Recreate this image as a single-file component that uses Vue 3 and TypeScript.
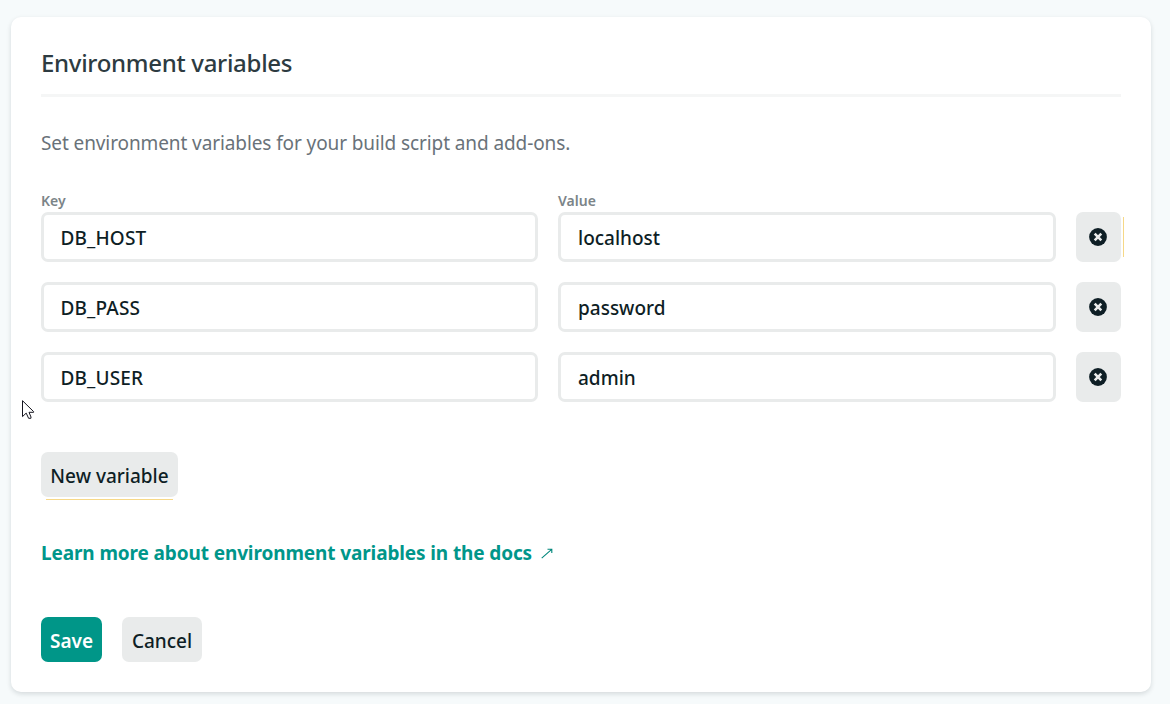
<script setup lang="ts">
import { ref } from 'vue'

interface EnvVariable {
  key: string
  value: string
}

const variables = ref<EnvVariable[]>([
  { key: 'DB_HOST', value: 'localhost' },
  { key: 'DB_PASS', value: 'password' },
  { key: 'DB_USER', value: 'admin' },
])

function addVariable(): void {
  variables.value.push({ key: '', value: '' })
}

function removeVariable(index: number): void {
  variables.value.splice(index, 1)
}
</script>

<template>
  <main class="page">
    <section class="card">
      <h2 class="title"><span>Environment variables</span></h2>
      <p class="intro"><span>Set environment variables for your build script and add-ons.</span></p>

      <div class="labels">
        <span class="label">Key</span>
        <span class="label">Value</span>
      </div>
      <div class="rows">
        <div v-for="(item, index) in variables" :key="index" class="row">
          <div class="field key"><span>{{ item.key }}</span></div>
          <div class="field value"><span>{{ item.value }}</span></div>
          <button
            class="remove"
            :class="{ marked: index === 0 }"
            type="button"
            aria-label="Remove"
            @click="removeVariable(index)"
          >
            <svg width="18" height="18" viewBox="0 0 18 18">
              <circle cx="9" cy="9" r="8.9" fill="#0e1e25" />
              <path d="M5.7 5.7 12.3 12.3M12.3 5.7 5.7 12.3" stroke="#e9ebeb" stroke-width="2.6" />
            </svg>
          </button>
        </div>
      </div>

      <button class="btn new" type="button" @click="addVariable"><span>New variable</span></button>

      <a class="docs">
        <span>Learn more about environment variables in the docs</span>
        <svg width="12" height="11" viewBox="0 0 12 11">
          <path d="M0.7 10.1 10.4 1.6M6.5 1.2H10.8V5" fill="none" stroke="#00867b" stroke-width="1.1" />
        </svg>
      </a>

      <div class="actions">
        <button class="btn save" type="button"><span>Save</span></button>
        <button class="btn cancel" type="button"><span>Cancel</span></button>
      </div>
    </section>

    <svg class="cursor" width="13" height="20" viewBox="0 0 13 20">
      <path
        d="M0.5 0.7V16.6L4.2 13.1L6.6 18.3H8.9L9 17L7 12.3H11.6V11.6Z"
        fill="#fff"
        stroke="#15151f"
        stroke-width="1"
      />
    </svg>
  </main>
</template>

<style>
body {
  background: #f6fafb;
}
</style>

<style scoped>
.page {
  box-sizing: border-box;
  position: relative;
  height: 704px;
  padding: 17px 19px 12px 11px;
  overflow: hidden;
  background: #f6fafb;
  font-family: 'Noto Sans', 'Open Sans', sans-serif;
  font-size: 19px;
  color: #0e1e25;
}
.card {
  box-sizing: border-box;
  display: flex;
  flex-direction: column;
  align-items: flex-start;
  height: 675px;
  padding: 30px;
  border-radius: 10px;
  background: #fff;
  box-shadow: 0 2px 5px rgba(14, 30, 37, 0.14);
}
span {
  white-space: nowrap;
}
.title {
  box-sizing: border-box;
  width: 100%;
  height: 50px;
  margin: 0;
  border-bottom: 3px solid #f5f6f6;
  font-size: 24px;
  font-weight: 500;
  line-height: 31px;
  letter-spacing: -0.3px;
  color: #2d3b41;
}
.intro {
  height: 30px;
  margin: 31px 0 0;
  line-height: 30px;
  letter-spacing: -0.1px;
  color: #697279;
}
.labels {
  display: grid;
  grid-template-columns: 497px 498px;
  gap: 20px;
  margin-top: 34px;
  height: 20px;
}
.label {
  height: 20px;
  font-size: 14px;
  font-weight: 600;
  line-height: 18px;
  color: #7b8488;
}
.rows {
  display: flex;
  flex-direction: column;
  gap: 20px;
  width: 100%;
}
.row {
  display: grid;
  grid-template-columns: 497px 498px 45px;
  grid-template-rows: 50px;
  gap: 20px;
}
.field {
  box-sizing: border-box;
  height: 50px;
  padding: 0 17px;
  border: 3px solid #e9ebeb;
  border-radius: 7px;
  font-weight: 500;
  line-height: 47px;
}
.key {
  padding-left: 16.5px;
  letter-spacing: 0.15px;
}
button {
  margin: 0;
  border: 0;
  font: inherit;
  color: inherit;
}
.remove {
  position: relative;
  display: flex;
  align-items: center;
  justify-content: center;
  padding: 0 1px 0 0;
  border-radius: 7px;
  background: #e9ebeb;
}
.remove svg {
  display: block;
}
.marked::after {
  content: '';
  position: absolute;
  top: 5px;
  right: -3px;
  width: 1px;
  height: 40px;
  background: #f6d887;
}
.btn {
  display: flex;
  justify-content: center;
  height: 45px;
  padding: 0;
  border-radius: 7px;
  background: #e9ebeb;
  font-weight: 500;
  line-height: 49px;
}
.new {
  position: relative;
  width: 137px;
  margin-top: 50px;
}
.new::after {
  content: '';
  position: absolute;
  right: 5px;
  bottom: -3px;
  left: 5px;
  height: 1px;
  background: #f6d887;
}
.docs {
  display: flex;
  align-items: center;
  gap: 9px;
  height: 30px;
  margin-top: 41px;
  font-weight: 700;
  line-height: 30px;
  letter-spacing: -0.12px;
  color: #00968a;
}
.actions {
  display: flex;
  gap: 20px;
  margin-top: 49px;
}
.save {
  width: 61px;
  background: #009688;
  font-weight: 600;
  color: #fff;
}
.cancel {
  width: 80px;
}
.cursor {
  position: absolute;
  top: 400px;
  left: 22px;
}
</style>
